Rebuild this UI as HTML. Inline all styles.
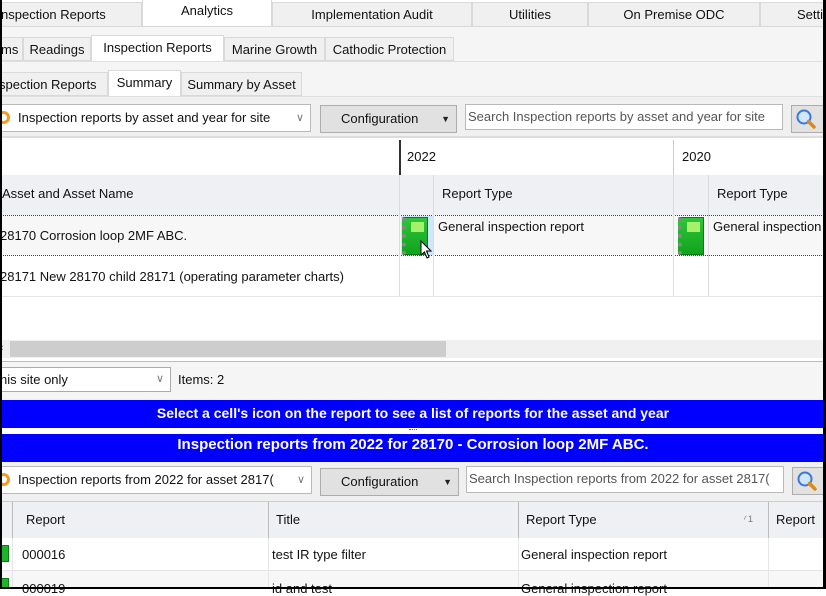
<!DOCTYPE html>
<html><head><meta charset="utf-8"><style>
*{margin:0;padding:0;box-sizing:border-box}
body{width:826px;height:589px;overflow:hidden;background:#fff;font-family:"Liberation Sans",sans-serif;font-size:13px;color:#111;position:relative}
.a{position:absolute;white-space:nowrap;overflow:hidden}
.tab{position:absolute;background:#f0f0f0;border:1px solid #d9d9d9;text-align:center;line-height:24px}
.sel{background:#fff;border-bottom-color:#fff}
.inp{position:absolute;background:#fff;border:1px solid #b9b9b9;line-height:24px;padding-left:18px;white-space:nowrap;overflow:hidden}
.btn{position:absolute;background:#e1e1e1;border:1px solid #adadad;line-height:26px;padding-left:20px}
.vl{position:absolute;width:1px;background:#dcdcdc}
.dd{position:absolute;right:6px;top:0;color:#777;font-size:11px}
.ic{position:absolute;width:26px;height:38px;background:linear-gradient(#2fc53a,#0fa41c);border:1px solid #0a7d14;border-left:4px dotted #888}
.ic:after{content:"";position:absolute;left:5px;top:4px;width:13px;height:10px;background:#a7f06a}
.ring{position:absolute;left:-3px;top:6px;width:13px;height:13px;border:3px solid #f59a1b;border-radius:50%;border-left-color:transparent}
</style></head><body>
<div class="a" style="left:0;top:0;width:826px;height:27px;background:#fff"></div>
<div class="tab" style="left:-2px;top:2px;width:144px;height:25px;text-align:left;padding-left:2px">nspection Reports</div>
<div class="tab sel" style="left:142px;top:0;width:130px;height:27px;line-height:22px;border-top:none">Analytics</div>
<div class="tab" style="left:272px;top:2px;width:200px;height:25px">Implementation Audit</div>
<div class="tab" style="left:472px;top:2px;width:116px;height:25px">Utilities</div>
<div class="tab" style="left:588px;top:2px;width:172px;height:25px">On Premise ODC</div>
<div class="tab" style="left:760px;top:2px;width:80px;height:25px;text-align:left;padding-left:36px">Setti</div>
<div class="a" style="left:0;top:26px;width:826px;height:1px;background:#d9d9d9"></div>
<div class="a" style="left:0;top:27px;width:826px;height:74px;background:#f5f5f5"></div>
<div class="tab" style="left:-2px;top:37px;width:25px;height:24px;padding-left:2px;text-align:left">ms</div>
<div class="tab" style="left:23px;top:37px;width:68px;height:24px">Readings</div>
<div class="tab sel" style="left:91px;top:35px;width:133px;height:27px;line-height:23px">Inspection Reports</div>
<div class="tab" style="left:224px;top:37px;width:101px;height:24px">Marine Growth</div>
<div class="tab" style="left:325px;top:37px;width:129px;height:24px">Cathodic Protection</div>
<div class="a" style="left:0;top:61px;width:826px;height:1px;background:#e0e0e0"></div>
<div class="tab" style="left:-2px;top:72px;width:110px;height:24px;text-align:left;padding-left:0">spection Reports</div>
<div class="tab sel" style="left:108px;top:70px;width:73px;height:27px;line-height:23px">Summary</div>
<div class="tab" style="left:181px;top:72px;width:121px;height:24px">Summary by Asset</div>
<div class="a" style="left:0;top:96px;width:826px;height:1px;background:#e0e0e0"></div>
<div class="a" style="left:0;top:97px;width:826px;height:40px;background:#f0f0f0"></div>
<div class="inp" style="left:-1px;top:104px;width:312px;height:28px;line-height:26px"><span class="ring"></span>Inspection reports by asset and year for site<span class="dd">∨</span></div>
<div class="btn" style="left:320px;top:105px;width:137px;height:28px">Configuration<span class="dd" style="color:#222;font-size:9px">▼</span></div>
<div class="inp" style="left:465px;top:104px;width:318px;height:26px;padding-left:2px;color:#555">Search Inspection reports by asset and year for site</div>
<div class="btn" style="left:791px;top:105px;width:40px;height:28px;padding:0"><svg width="30" height="26" viewBox="0 0 30 26"><circle cx="12" cy="11" r="6.5" fill="#cfe6ff" stroke="#3a78d8" stroke-width="2"/><line x1="16.5" y1="15.5" x2="22" y2="21" stroke="#d98a1a" stroke-width="3.5" stroke-linecap="round"/></svg></div>
<div class="a" style="left:0;top:136px;width:826px;height:2px;background:#ddd"></div>
<div class="a" style="left:399px;top:140px;width:2px;height:35px;background:#333"></div>
<div class="a" style="left:407px;top:149px">2022</div>
<div class="a" style="left:673px;top:140px;width:1px;height:35px;background:#ccc"></div>
<div class="a" style="left:682px;top:149px">2020</div>
<div class="a" style="left:0;top:175px;width:826px;height:40px;background:#eef0f4"></div>
<div class="a" style="left:2px;top:186px">Asset and Asset Name</div>
<div class="a" style="left:442px;top:186px">Report Type</div>
<div class="a" style="left:717px;top:186px">Report Type</div>
<div class="a" style="left:0;top:215px;width:826px;height:41px;background:#f7f7f7;border-top:1px dotted #444;border-bottom:1px dotted #444"></div>
<div class="vl" style="left:399px;top:175px;height:122px"></div>
<div class="vl" style="left:433px;top:175px;height:122px"></div>
<div class="vl" style="left:673px;top:175px;height:122px"></div>
<div class="vl" style="left:708px;top:175px;height:122px"></div>
<div class="a" style="left:0;top:296px;width:826px;height:1px;background:#e6e6e6"></div>
<div class="a" style="left:0;top:228px">28170 Corrosion loop 2MF ABC.</div>
<div class="a" style="left:0;top:269px">28171 New 28170 child 28171 (operating parameter charts)</div>
<div class="a" style="left:401px;top:216px;width:32px;height:39px;background:#cfe6fb"></div>
<div class="ic" style="left:402px;top:217px"></div>
<div class="ic" style="left:678px;top:217px"></div>
<div class="a" style="left:438px;top:219px">General inspection report</div>
<div class="a" style="left:713px;top:219px">General inspection</div>
<svg class="a" style="left:420px;top:240px" width="14" height="20"><path d="M1 1 L1 15 L4.5 12 L7 18 L9 17 L6.5 11 L11 11 Z" fill="#fff" stroke="#000"/></svg>
<div class="a" style="left:0;top:340px;width:826px;height:18px;background:#f0f0f0"></div>
<div class="a" style="left:10px;top:341px;width:436px;height:16px;background:#cdcdcd"></div>
<div class="a" style="left:0;top:342px;font-size:11px;color:#666">‹</div>
<div class="a" style="left:0;top:361px;width:826px;height:1px;background:#bbb"></div>
<div class="a" style="left:0;top:362px;width:826px;height:38px;background:#f5f5f5"></div>
<div class="inp" style="left:-1px;top:367px;width:172px;height:25px;padding-left:0;line-height:23px;border-color:#aaa">his site only<span class="dd">∨</span></div>
<div class="a" style="left:178px;top:372px">Items: 2</div>
<div class="a" style="left:0;top:400px;width:826px;height:28px;background:#0000ff;color:#fff;font-weight:bold;text-align:center;line-height:27px;font-size:14px">Select a cell's icon on the report to see a list of reports for the asset and year</div>
<div class="a" style="left:409px;top:429px;width:8px;height:2px;border-top:1px dotted #666"></div>
<div class="a" style="left:0;top:434px;width:826px;height:28px;background:#0000ff;color:#fff;font-weight:bold;text-align:center;line-height:22px;font-size:15px">Inspection reports from 2022 for 28170 - Corrosion loop 2MF ABC.</div>
<div class="a" style="left:0;top:462px;width:826px;height:40px;background:#f0f0f0"></div>
<div class="inp" style="left:-1px;top:466px;width:313px;height:28px;line-height:26px"><span class="ring"></span>Inspection reports from 2022 for asset 2817(<span class="dd">∨</span></div>
<div class="btn" style="left:320px;top:468px;width:139px;height:28px">Configuration<span class="dd" style="color:#222;font-size:9px">▼</span></div>
<div class="inp" style="left:466px;top:466px;width:318px;height:27px;padding-left:2px;color:#555">Search Inspection reports from 2022 for asset 2817(</div>
<div class="btn" style="left:792px;top:467px;width:40px;height:28px;padding:0"><svg width="30" height="26" viewBox="0 0 30 26"><circle cx="12" cy="11" r="6.5" fill="#cfe6ff" stroke="#3a78d8" stroke-width="2"/><line x1="16.5" y1="15.5" x2="22" y2="21" stroke="#d98a1a" stroke-width="3.5" stroke-linecap="round"/></svg></div>
<div class="a" style="left:0;top:501px;width:826px;height:1px;background:#ccc"></div>
<div class="a" style="left:0;top:502px;width:826px;height:36px;background:#eef0f4"></div>
<div class="a" style="left:12px;top:502px;width:1px;height:36px;background:#bbb"></div>
<div class="a" style="left:268px;top:502px;width:1px;height:36px;background:#bbb"></div>
<div class="a" style="left:518px;top:502px;width:1px;height:36px;background:#bbb"></div>
<div class="a" style="left:768px;top:502px;width:1px;height:36px;background:#bbb"></div>
<div class="a" style="left:26px;top:512px">Report</div>
<div class="a" style="left:276px;top:512px">Title</div>
<div class="a" style="left:526px;top:512px">Report Type</div>
<div class="a" style="left:744px;top:514px;font-size:9px;color:#777">⁄ 1</div>
<div class="a" style="left:776px;top:512px">Report</div>
<div class="a" style="left:0;top:538px;width:826px;height:33px;background:#fff;border-bottom:1px solid #e4e4e4"></div>
<div class="a" style="left:0;top:571px;width:826px;height:18px;background:#f7f7f7"></div>
<div class="vl" style="left:12px;top:538px;height:51px;background:#e6e6e6"></div>
<div class="vl" style="left:268px;top:538px;height:51px;background:#e6e6e6"></div>
<div class="vl" style="left:518px;top:538px;height:51px;background:#e6e6e6"></div>
<div class="vl" style="left:768px;top:538px;height:51px;background:#e6e6e6"></div>
<div class="a" style="left:0;top:545px;width:9px;height:17px;background:#1eb52a;border:1px solid #0a7d14"></div>
<div class="a" style="left:0;top:578px;width:9px;height:11px;background:#1eb52a;border:1px solid #0a7d14"></div>
<div class="a" style="left:22px;top:547px">000016</div>
<div class="a" style="left:272px;top:547px">test IR type filter</div>
<div class="a" style="left:521px;top:547px">General inspection report</div>
<div class="a" style="left:22px;top:581px">000019</div>
<div class="a" style="left:272px;top:581px">id and test</div>
<div class="a" style="left:521px;top:581px">General inspection report</div>
<div class="a" style="left:0;top:0;width:2px;height:589px;background:#000"></div>
<div class="a" style="left:823px;top:0;width:3px;height:589px;background:#000"></div>
<div class="a" style="left:0;top:587px;width:826px;height:2px;background:#000"></div>
</body></html>
